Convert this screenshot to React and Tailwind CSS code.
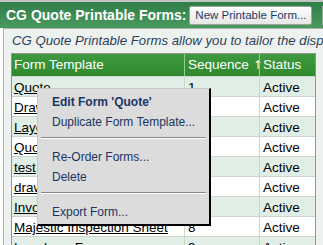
import React from "react";

const rows = [
  { name: "Quote", seq: "1" },
  { name: "Drawing Sheet", seq: "2" },
  { name: "Layout Form", seq: "3" },
  { name: "Quote Detail", seq: "4" },
  { name: "test", seq: "5" },
  { name: "drawing", seq: "6" },
  { name: "Invoice", seq: "7" },
  { name: "Majestic Inspection Sheet", seq: "8" },
  { name: "Longhorn Form", seq: "9" },
];

function Separator() {
  return <div className="mx-[3px] mt-[5px] mb-[8px] h-[2px] border-t border-[#8a8a8a] border-b border-b-white" />;
}

export default function App() {
  return (
    <div className="w-[323px] h-[245px] overflow-hidden bg-white font-['Liberation_Sans',Arial,sans-serif] relative">
      <div className="h-[2px] bg-[#c4c4c4]" />
      <div className="h-[26px] flex items-center bg-gradient-to-b from-[#2f7d47] to-[#4a9a60] pl-[6px]">
        <span className="text-white font-bold text-[14px] whitespace-nowrap">CG Quote Printable Forms:</span>
        <button className="ml-[3px] h-[19px] w-[123px] shrink-0 bg-gradient-to-b from-white to-[#e6e6e6] border border-[#9aa89a] rounded-[2px] text-[11.5px] text-[#1d3a66] whitespace-nowrap">
          New Printable Form...
        </button>
        <div className="ml-[10px] h-[19px] w-[20px] bg-[#f3f3f3] border border-[#9aa89a] shrink-0" />
      </div>
      <div className="ml-[3px] border-l border-t border-[#a9b3a9] bg-[#eef2ee] h-[217px] pl-[5px]">
        <div className="h-[24px] flex items-center pl-[3px] italic text-[13.2px] text-[#2a3f5c] whitespace-nowrap">
          CG Quote Printable Forms allow you to tailor the display of your quotes
        </div>
        <div className="w-[305px] border border-[#8a9a8a] ml-[2px]">
          <div className="grid grid-cols-[172px_75px_56px] h-[22px] bg-gradient-to-b from-[#3f9a3f] to-[#2f8a2f] text-white text-[13.5px] whitespace-nowrap">
            <div className="pl-[2px] flex items-center">Form Template</div>
            <div className="pl-[3px] flex items-center border-l border-[#8fcf8f]">
              Sequence <span className="ml-[4px] font-['DejaVu_Sans',sans-serif] text-[12px]">↑</span>
            </div>
            <div className="pl-[3px] flex items-center border-l border-[#8fcf8f]">Status</div>
          </div>
          {rows.map((r, i) => (
            <div
              key={r.name}
              className={`grid grid-cols-[172px_75px_56px] h-[20px] pt-[1px] text-[13.5px] text-black border-t border-[#c9d6cc] ${
                i % 2 === 0 ? "bg-[#e1eee5]" : "bg-white"
              }`}
            >
              <div className="pl-[2px] flex items-center underline whitespace-nowrap overflow-hidden">{r.name}</div>
              <div className="pl-[3px] flex items-center border-l border-[#c9d6cc]">{r.seq}</div>
              <div className="pl-[3px] flex items-center border-l border-[#c9d6cc]">Active</div>
            </div>
          ))}
        </div>
      </div>

      <div className="absolute left-[37px] top-[88px] w-[174px] h-[138px] bg-[#dcdcdc] border-t border-l border-[#c8c8c8] border-r-2 border-b-2 border-r-black border-b-black pt-[3px] text-[12px] text-[#1a3563]">
        <div className="pl-[14px] h-[20px] flex items-center font-bold">Edit Form 'Quote'</div>
        <div className="pl-[14px] h-[20px] flex items-center">Duplicate Form Template...</div>
        <Separator />
        <div className="pl-[14px] h-[20px] flex items-center">Re-Order Forms...</div>
        <div className="pl-[14px] h-[20px] flex items-center">Delete</div>
        <Separator />
        <div className="pl-[14px] h-[20px] flex items-center">Export Form...</div>
      </div>
    </div>
  );
}
